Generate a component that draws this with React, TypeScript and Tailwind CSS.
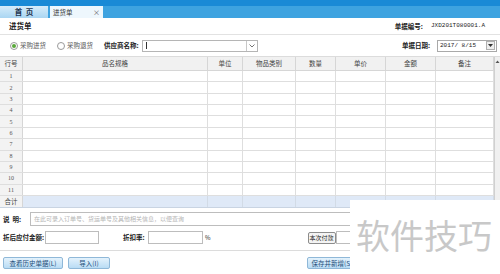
import React from "react";

const columns = [
  { label: "品名规格", w: "w-[185px]" },
  { label: "单位", w: "w-[35px]" },
  { label: "物品类别", w: "w-[53px]" },
  { label: "数量", w: "w-[40px]" },
  { label: "单价", w: "w-[50px]" },
  { label: "金额", w: "w-[50px]" },
  { label: "备注", w: "w-[58px]" },
];

const rows = Array.from({ length: 11 }, (_, i) => i + 1);

const Radio = ({ checked }: { checked?: boolean }) => (
  <span className="flex h-[8px] w-[8px] items-center justify-center rounded-full border border-[#9a9a9a] bg-white">
    {checked ? <span className="h-[4px] w-[4px] rounded-full bg-[#5aa83a]" /> : null}
  </span>
);

const BlueButton = ({ children, w }: { children: React.ReactNode; w: string }) => (
  <button
    type="button"
    className={`flex h-[12px] ${w} items-center justify-center rounded-[2px] border border-[#8fb8d8] bg-gradient-to-b from-[#e4f2fc] to-[#b9dcf4] text-[6.5px] text-[#1d4e7a]`}
  >
    {children}
  </button>
);

const App = () => {
  return (
    <div className="relative h-[274px] w-[500px] overflow-hidden bg-white font-['Noto_Sans_CJK_SC',sans-serif] text-[7px] leading-none text-[#222]">
      {/* top bar */}
      <div className="h-[6px] bg-[#1a8ad6]" />
      <div className="flex h-[12px] items-stretch bg-[#3ea3e0]">
        <div className="flex w-[48px] items-center justify-center bg-gradient-to-b from-[#d5ecfa] to-[#aad6f2] text-[7.5px] font-bold text-[#1d3550]">
          首&nbsp;&nbsp;页
        </div>
        <div className="ml-[2px] flex w-[53px] items-center justify-between bg-[#eef7fd] pl-[3px] pr-[3px] text-[6.5px] text-[#333]">
          <span>进货单</span>
          <span className="text-[7px] text-[#555]">×</span>
        </div>
      </div>

      {/* title */}
      <div className="flex h-[17px] items-center justify-between border-b border-[#e2e2e2] pl-[9px] pr-[15px]">
        <span className="text-[7.5px] font-bold">进货单</span>
        <div className="flex items-center gap-[8px] text-[6.5px]">
          <span className="font-bold">单据编号:</span>
          <span className="font-['Liberation_Mono',monospace] text-[6px]">JXD201T080001.A</span>
        </div>
      </div>

      {/* filter row */}
      <div className="flex h-[22px] items-center justify-between border-b border-[#dcdcdc] pl-[10px] pr-[3px] text-[6.5px]">
        <div className="flex items-center">
          <Radio checked />
          <span className="ml-[2px] text-[#555]">采购进货</span>
          <span className="ml-[11px]">
            <Radio />
          </span>
          <span className="ml-[2px] text-[#555]">采购退货</span>
          <span className="ml-[11px] font-bold">供应商名称:</span>
          <div className="ml-[3px] flex h-[12px] w-[116px] items-center border border-[#b5b5b5]">
            <span className="ml-[3px] h-[7px] w-px bg-[#333]" />
            <span className="ml-auto flex h-full w-[11px] items-center justify-center border-l border-[#c8c8c8] text-[#666]">
              <svg width="6" height="4" viewBox="0 0 6 4">
                <path d="M0.5 0.5 L3 3 L5.5 0.5" fill="none" stroke="#666" strokeWidth="0.9" />
              </svg>
            </span>
          </div>
        </div>
        <div className="flex items-center">
          <span className="font-bold">单据日期:</span>
          <div className="ml-[7px] flex h-[12px] w-[60px] items-center border border-[#a9a9a9] pl-[2px] font-['Liberation_Mono',monospace] text-[6px]">
            2017/ 8/15
            <span className="ml-auto mr-[1px] flex h-[9px] w-[9px] items-center justify-center border border-[#b0b0b0] bg-[#eeeeee]">
              <svg width="5" height="3" viewBox="0 0 5 3">
                <path d="M0 0 L5 0 L2.5 3 Z" fill="#333" />
              </svg>
            </span>
          </div>
        </div>
      </div>

      {/* table */}
      <div className="flex">
        <div className="w-[494px]">
          <div className="flex h-[14px] border-b border-[#d6d6d6] bg-[#f1f1f1] text-[6.5px] text-[#444]">
            <div className="flex w-[23px] items-center justify-center border-r border-[#d6d6d6]">行号</div>
            {columns.map((c) => (
              <div key={c.label} className={`flex ${c.w} items-center justify-center border-r border-[#d6d6d6]`}>
                {c.label}
              </div>
            ))}
          </div>
          <div className="flex h-[125px] flex-col">
            {rows.map((r) => (
              <div key={r} className="flex flex-1 border-b border-[#dedede]">
                <div className="flex w-[23px] items-center justify-center border-r border-[#d6d6d6] bg-[#f3f3f3] font-['Liberation_Serif',serif] text-[6px] text-[#555]">
                  {r}
                </div>
                {columns.map((c) => (
                  <div key={c.label} className={`${c.w} border-r border-[#dedede]`} />
                ))}
              </div>
            ))}
          </div>
          <div className="flex h-[12px] border-b border-[#c9d4e2] bg-[#dfe9f7]">
            <div className="flex w-[23px] items-center justify-center border-r border-[#d6d6d6] bg-[#f3f3f3] text-[6.5px] text-[#444]">
              合计
            </div>
            {columns.map((c) => (
              <div key={c.label} className={`${c.w} border-r border-[#d2dbe6]`} />
            ))}
          </div>
        </div>
        <div className="w-[6px] border-l border-[#d0d0d0] bg-[#f0f0f0]">
          <svg width="5" height="10" viewBox="0 0 5 10" className="mt-[2px]">
            <path d="M0.5 4 L2.5 1.5 L4.5 4 Z" fill="#555" />
          </svg>
        </div>
      </div>

      {/* remarks */}
      <div className="mt-[4px] flex h-[14px] items-center pl-[3px] text-[6.5px]">
        <span className="w-[27px] font-bold">说&nbsp;&nbsp;明:</span>
        <div className="flex h-full flex-1 items-center border border-r-0 border-[#bdbdbd] pl-[3px] text-[6px] text-[#b5b5b5]">
          在此可录入订单号、货运单号及其他相关信息，以便查询
        </div>
      </div>

      <div className="mt-[5px] flex h-[13px] items-center pl-[3px] text-[6.5px]">
        <span className="w-[42px] font-bold">折后应付金额:</span>
        <div className="h-full w-[54px] border border-[#bdbdbd]" />
        <span className="ml-[24px] w-[25px] font-bold">折扣率:</span>
        <div className="h-full w-[55px] border border-[#bdbdbd]" />
        <span className="ml-[2px] text-[6px]">%</span>
        <div className="ml-[97px] flex h-[12px] w-[28px] items-center justify-center rounded-[2px] border border-[#8c8c8c] bg-[#f4f4f4] text-[6px]">
          本次付款
        </div>
        <div className="h-full w-[60px] border border-[#bdbdbd]" />
      </div>

      <div className="mt-[6px] border-t border-[#dcdcdc]" />

      <div className="mt-[6px] flex items-center pl-[3px]">
        <BlueButton w="w-[60px]">查看历史单据(L)</BlueButton>
        <span className="ml-[5px]">
          <BlueButton w="w-[42px]">导入(I)</BlueButton>
        </span>
        <span className="ml-[197px]">
          <BlueButton w="w-[50px]">保存并新增(S)</BlueButton>
        </span>
      </div>

      {/* watermark overlay */}
      <div className="absolute bottom-0 left-[350px] right-0 top-[200px] bg-white pl-[6px] pt-[18px]">
        <span className="text-[34px] leading-none tracking-[0px] text-[#c8c8c8]">软件技巧</span>
      </div>
    </div>
  );
};

export default App;
